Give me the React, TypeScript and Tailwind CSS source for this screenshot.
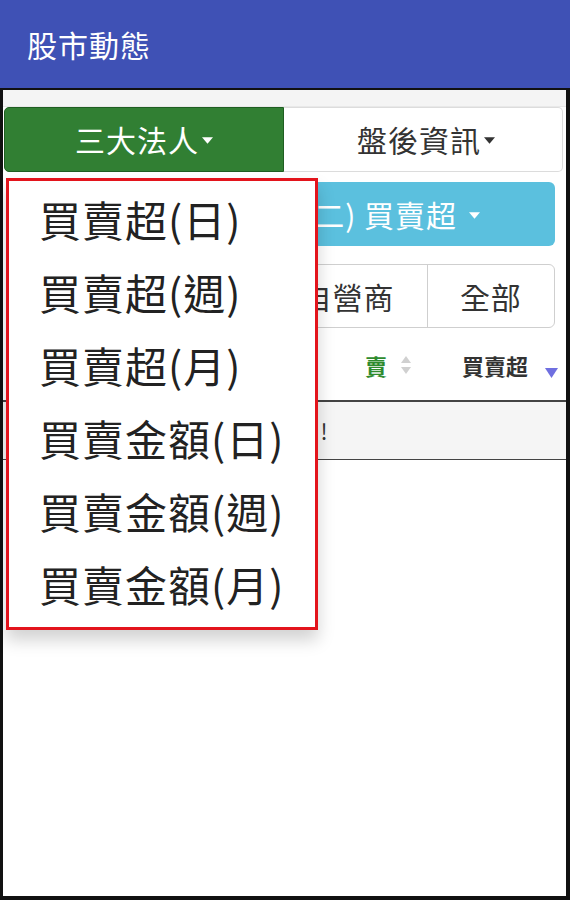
import React from 'react'

const menuItems = ['買賣超(日)', '買賣超(週)', '買賣超(月)', '買賣金額(日)', '買賣金額(週)', '買賣金額(月)']
const groups = ['外資', '投信', '自營商', '全部']

function Caret({ className }: { className?: string }) {
  return (
    <svg viewBox="0 0 10 6" className={className} fill="currentColor">
      <path d="M0 0h10L5 6z" />
    </svg>
  )
}

function SortIcon() {
  return (
    <svg viewBox="0 0 12 20" className="w-[12px] h-[20px] text-[#d0d0d0]" fill="currentColor">
      <path d="M6 1l5 7H1z" />
      <path d="M6 19l5-7H1z" />
    </svg>
  )
}

export default function App() {
  return (
    <div className="relative w-[570px] h-[900px] overflow-hidden bg-white font-['Noto_Sans_CJK_TC','Noto_Sans',sans-serif]">
      {/* App bar */}
      <header className="h-[88px] bg-[#3f51b5] flex items-center pl-[27px] text-white text-[30px] tracking-[1px]">
        股市動態
      </header>

      {/* Webview frame */}
      <div className="h-[812px] flex flex-col border-t-2 border-l-[3px] border-r-[4px] border-b-[4px] border-[#111]">
        <div className="h-[17px] bg-[#f4f4f4] border-b border-[#e8e8e8]" />

        {/* Top tabs */}
        <div className="flex h-[65px] ml-[1px] mr-[3px]">
          <button className="flex-1 flex items-center justify-center gap-[3px] bg-[#317f33] border border-[#1f5e22] rounded-l-[5px] text-white text-[30px] tracking-[1px]">
            三大法人
            <Caret className="w-[11px] h-[7px] mt-[2px]" />
          </button>
          <button className="flex-1 flex items-center justify-center gap-[3px] bg-white border border-l-0 border-[#dcdcdc] rounded-r-[5px] text-[#333] text-[30px] tracking-[1px]">
            <span className="ml-[6px]">盤後資訊</span>
            <Caret className="w-[11px] h-[7px] mt-[2px]" />
          </button>
        </div>

        {/* Report select */}
        <div className="mt-[10px] mx-[11px] h-[64px] flex items-center justify-end pr-[75px] bg-[#5bc0de] rounded-[6px] text-white text-[30px] tracking-[1px]">
          三大法人(二) 買賣超
          <Caret className="w-[11px] h-[7px] ml-[12px] mt-[2px]" />
        </div>

        {/* Investor group */}
        <div className="mt-[18px] mx-[11px] h-[64px] flex border border-[#cfcfcf] rounded-[6px] text-[#333] text-[30px] tracking-[1px]">
          {groups.map((g, i) => (
            <div
              key={g}
              className={
                'flex-auto flex items-center justify-center' + (i > 0 ? ' border-l border-[#cfcfcf]' : '')
              }
            >
              {g}
            </div>
          ))}
        </div>

        {/* Table header */}
        <div className="mt-[2px] h-[72px] grid grid-cols-[1fr_110px_97px_116px] items-center border-b-2 border-[#444] text-[22px] font-bold text-[#333]">
          <div className="pl-[12px]">股票名稱</div>
          <div className="flex items-center gap-[13px] pl-[12px] text-[#d9534f]">
            買
            <SortIcon />
          </div>
          <div className="flex items-center gap-[13px] pl-[12px] text-[#2e8b2e]">
            賣
            <SortIcon />
          </div>
          <div className="flex items-center pl-[12px]">
            買賣超
            <svg viewBox="0 0 13 10" className="w-[13px] h-[10px] ml-[17px] mt-[16px] text-[#6f6fe0]" fill="currentColor">
              <path d="M0 0h13L6.5 10z" />
            </svg>
          </div>
        </div>

        {/* Empty row */}
        <div className="h-[58px] flex items-center justify-center pr-[14px] bg-[#f5f5f5] border-b border-[#444] text-[22px] text-[#333]">
          查無資料 !
        </div>
      </div>

      {/* Open dropdown menu */}
      <div className="absolute left-[6px] top-[178px] w-[312px] h-[452px] bg-white border-[3px] border-[#e3141c] pt-[1px] pb-[7px] shadow-[0_10px_16px_rgba(0,0,0,0.18)]">
        {menuItems.map(item => (
          <div key={item} className="h-[73px] flex items-center pl-[30px] text-[42px] tracking-[1px] text-[#222]">
            {item}
          </div>
        ))}
      </div>
    </div>
  )
}
